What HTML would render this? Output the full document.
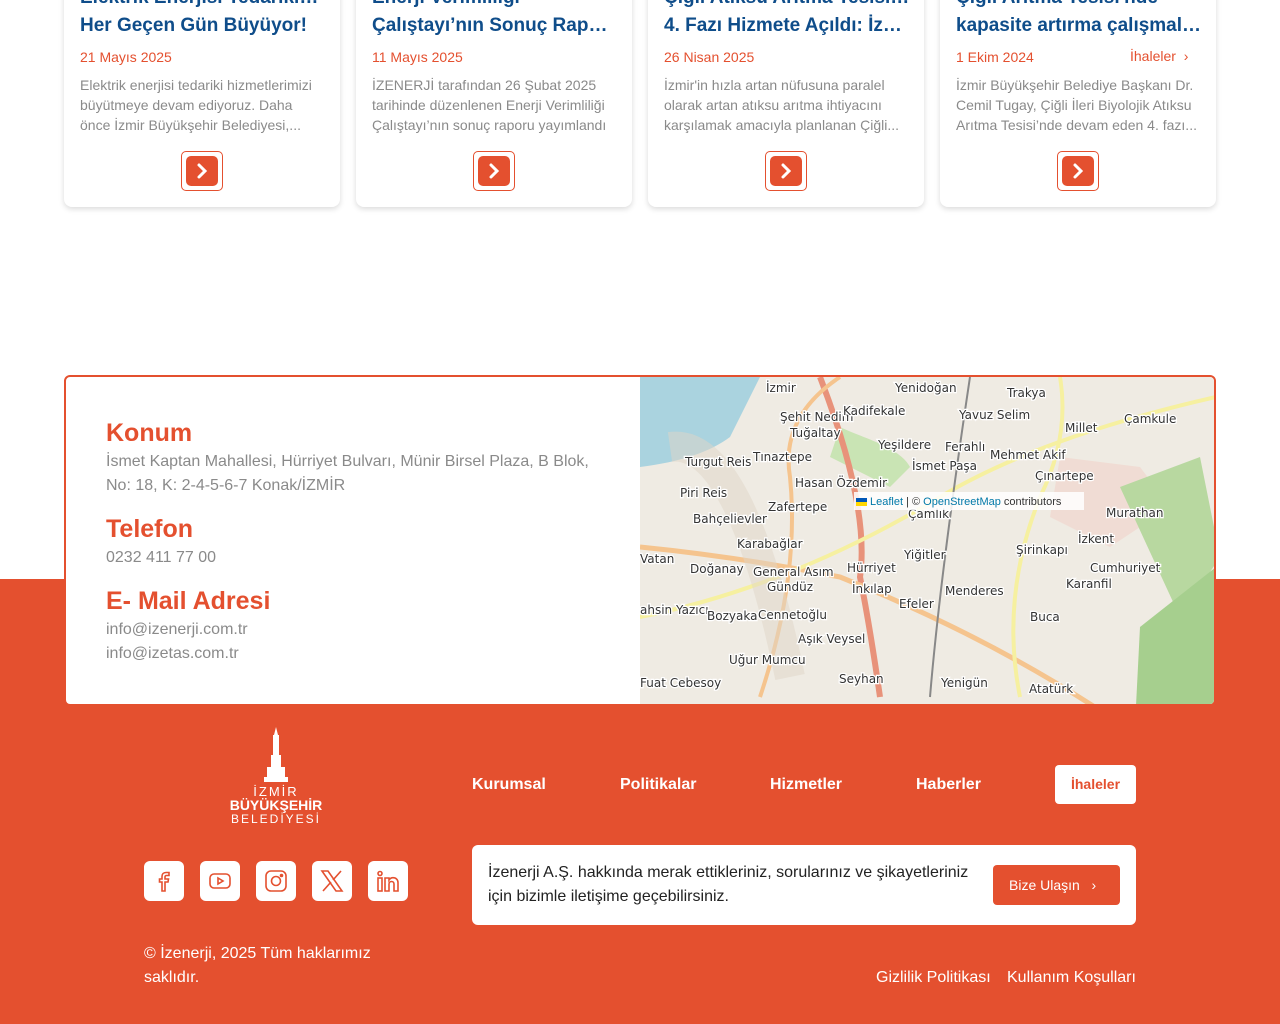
<!DOCTYPE html>
<html><head><meta charset="utf-8"><style>
*{box-sizing:border-box;margin:0;padding:0}
body{width:1280px;height:1024px;position:relative;overflow:hidden;background:#fff;font-family:"Liberation Sans",sans-serif}
.abs{position:absolute}
.card{position:absolute;top:-20px;width:276px;height:227px;background:#fff;border-radius:8px;box-shadow:0 2px 6px rgba(0,0,0,.15)}
.card .t{position:absolute;left:16px;top:4px;width:246px;color:#0f4d8a;font-weight:bold;font-size:19px;line-height:28px;white-space:nowrap;overflow:hidden;text-overflow:ellipsis}
.card .d{position:absolute;left:16px;top:69px;color:#e4502f;font-size:14px}
.card .p{position:absolute;left:16px;top:95px;width:246px;color:#8a8a8a;font-size:14px;line-height:20px}
.card .p div{white-space:nowrap;overflow:hidden;text-overflow:ellipsis}
.btn{position:absolute;left:117px;top:171px;width:42px;height:40px;border:1px solid #e4502f;border-radius:5px}
.btn div{position:absolute;left:4px;top:4px;width:32px;height:30px;background:#e4502f;border-radius:5px}
.orange{position:absolute;left:0;top:579px;width:1280px;height:445px;background:#e4502f}
.box{position:absolute;left:64px;top:375px;width:1152px;height:331px;border:2px solid #e4502f;border-radius:6px;background:#fff;overflow:hidden}
h3{position:absolute;left:40px;color:#e4502f;font-size:25px;font-weight:bold}
.ct{position:absolute;left:40px;color:#8a8a8a;font-size:16px;line-height:24px}
.nav{position:absolute;top:776px;color:#fff;font-weight:bold;font-size:16px}
.soc{position:absolute;top:861px;width:40px;height:40px;background:#fff;border-radius:6px}
.soc svg{position:absolute;left:8px;top:8px}
.map text{font-family:"DejaVu Sans",sans-serif;font-size:12px;fill:#333;stroke:#fff;stroke-width:2.5px;paint-order:stroke}
</style></head><body>

<div class="card" style="left:64px"><div class="t">Elektrik Enerjisi Tedarikimiz<br>Her Geçen Gün Büyüyor!</div><div class="d">21 Mayıs 2025</div><div class="p"><div>Elektrik enerjisi tedariki hizmetlerimizi</div><div>büyütmeye devam ediyoruz. Daha</div><div>önce İzmir Büyükşehir Belediyesi,...</div></div><div class="btn"><div><svg width="32" height="30"><path d="M13 9l6 6-6 6" stroke="#fff" stroke-width="3" fill="none" stroke-linecap="round"/></svg></div></div></div>
<div class="card" style="left:356px"><div class="t">Enerji Verimliliği<br>Çalıştayı’nın Sonuç Raporu</div><div class="d">11 Mayıs 2025</div><div class="p"><div>İZENERJİ tarafından 26 Şubat 2025</div><div>tarihinde düzenlenen Enerji Verimliliği</div><div>Çalıştayı’nın sonuç raporu yayımlandı</div></div><div class="btn"><div><svg width="32" height="30"><path d="M13 9l6 6-6 6" stroke="#fff" stroke-width="3" fill="none" stroke-linecap="round"/></svg></div></div></div>
<div class="card" style="left:648px"><div class="t">Çiğli Atıksu Arıtma Tesisinin<br>4. Fazı Hizmete Açıldı: İzmir</div><div class="d">26 Nisan 2025</div><div class="p"><div>İzmir'in hızla artan nüfusuna paralel</div><div>olarak artan atıksu arıtma ihtiyacını</div><div>karşılamak amacıyla planlanan Çiğli...</div></div><div class="btn"><div><svg width="32" height="30"><path d="M13 9l6 6-6 6" stroke="#fff" stroke-width="3" fill="none" stroke-linecap="round"/></svg></div></div></div>
<div class="card" style="left:940px"><div class="t">Çiğli Arıtma Tesisi'nde<br>kapasite artırma çalışmaları</div><div class="d">1 Ekim 2024</div><div class="p"><div>İzmir Büyükşehir Belediye Başkanı Dr.</div><div>Cemil Tugay, Çiğli İleri Biyolojik Atıksu</div><div>Arıtma Tesisi’nde devam eden 4. fazı...</div></div><div class="btn"><div><svg width="32" height="30"><path d="M13 9l6 6-6 6" stroke="#fff" stroke-width="3" fill="none" stroke-linecap="round"/></svg></div></div></div>
<div class="abs" style="left:1130px;top:48px;color:#e4502f;font-size:14px">İhaleler &nbsp;›</div>

<div class="orange"></div>
<div class="box">
<h3 style="top:42px">Konum</h3>
<div class="ct" style="top:73px">İsmet Kaptan Mahallesi, Hürriyet Bulvarı, Münir Birsel Plaza, B Blok,<br>No: 18, K: 2-4-5-6-7 Konak/İZMİR</div>
<h3 style="top:138px">Telefon</h3>
<div class="ct" style="top:169px">0232 411 77 00</div>
<h3 style="top:210px">E- Mail Adresi</h3>
<div class="ct" style="top:241px">info@izenerji.com.tr<br>info@izetas.com.tr</div>
<svg class="map" style="position:absolute;left:574px;top:0" width="576" height="329">
<rect width="576" height="329" fill="#efebe3"/>
<path d="M0 0H120C110 20 100 40 90 60C70 75 40 85 0 90Z" fill="#aad3df"/>
<path d="M200 50c20 10 60 20 70 40l-20 20-60-30z" fill="#c9e4b4"/>
<path d="M420 80l80 10 30 40-60 40-60-30z" fill="#f0d8d0" opacity=".8"/>
<path d="M480 110l80-30 20 100-40 60z" fill="#b8d8a0"/>
<path d="M500 250l76-60v139h-80z" fill="#a6cf8e"/>
<path d="M240 320 Q230 250 220 200 Q230 130 180 0" stroke="#e8927a" stroke-width="6" fill="none"/>
<path d="M0 170 Q100 180 200 200 Q350 260 470 340" stroke="#f5c48e" stroke-width="5" fill="none"/>
<path d="M0 240 Q150 210 300 120 Q400 60 576 20" stroke="#f6f0a0" stroke-width="4" fill="none"/>
<path d="M120 320 Q160 200 150 100 Q140 40 200 0" stroke="#f5c48e" stroke-width="4" fill="none"/>
<path d="M380 320 Q360 220 400 120 Q430 60 420 0" stroke="#f6f0a0" stroke-width="4" fill="none"/>
<path d="M30 70 Q100 60 150 300" stroke="#e0d6c8" stroke-width="30" fill="none" opacity=".5"/>
<path d="M290 320 Q300 200 330 0" stroke="#888" stroke-width="2" fill="none"/>
<text x="126" y="15">İzmir</text><text x="140" y="44">Şehit Nedim</text><text x="150" y="60">Tuğaltay</text>
<text x="203" y="38">Kadifekale</text><text x="255" y="15">Yenidoğan</text><text x="367" y="20">Trakya</text>
<text x="319" y="42">Yavuz Selim</text><text x="425" y="55">Millet</text><text x="484" y="46">Çamkule</text>
<text x="238" y="72">Yeşildere</text><text x="305" y="74">Ferahlı</text><text x="350" y="82">Mehmet Akif</text>
<text x="45" y="89">Turgut Reis</text><text x="113" y="84">Tınaztepe</text><text x="272" y="93">İsmet Paşa</text>
<text x="395" y="103">Çınartepe</text><text x="155" y="110">Hasan Özdemir</text><text x="40" y="120">Piri Reis</text>
<text x="128" y="134">Zafertepe</text><text x="53" y="146">Bahçelievler</text><text x="268" y="141">Çamlık</text>
<text x="466" y="140">Murathan</text><text x="97" y="171">Karabağlar</text><text x="264" y="182">Yiğitler</text>
<text x="376" y="177">Şirinkapı</text><text x="438" y="166">İzkent</text><text x="0" y="186">Vatan</text>
<text x="50" y="196">Doğanay</text><text x="113" y="199">General Asım</text><text x="207" y="195">Hürriyet</text>
<text x="450" y="195">Cumhuriyet</text><text x="127" y="214">Gündüz</text><text x="212" y="216">İnkılap</text>
<text x="305" y="218">Menderes</text><text x="426" y="211">Karanfil</text><text x="259" y="231">Efeler</text>
<text x="0" y="237">ahsin Yazıcı</text><text x="67" y="243">Bozyaka</text><text x="118" y="242">Cennetoğlu</text>
<text x="390" y="244">Buca</text><text x="158" y="266">Aşık Veysel</text><text x="89" y="287">Uğur Mumcu</text>
<text x="0" y="310">Fuat Cebesoy</text><text x="199" y="306">Seyhan</text><text x="301" y="310">Yenigün</text>
<text x="389" y="316">Atatürk</text>
<rect x="214" y="115" width="230" height="18" fill="#fff" opacity=".85"/>
<rect x="216" y="121" width="11" height="4" fill="#0057b7"/><rect x="216" y="125" width="11" height="4" fill="#ffd700"/>
<text x="230" y="128" style="font-family:'Liberation Sans';font-size:11px;stroke:none;fill:#0078a8">Leaflet <tspan fill="#333">| ©</tspan> OpenStreetMap <tspan fill="#333">contributors</tspan></text>
</svg>
</div>

<div class="abs" style="left:226px;top:727px;width:100px;text-align:center;color:#fff">
<svg width="30" height="55" viewBox="0 0 30 55"><path d="M15 0l2 8h1v20h2v12h4v10h3v5H3v-5h3V40h4V28h2V8h1z" fill="#fff"/></svg>
<div style="font-size:13px;letter-spacing:2px;line-height:13px;margin-top:-2px">İZMİR</div>
<div style="font-size:14px;font-weight:bold;line-height:15px">BÜYÜKŞEHİR</div>
<div style="font-size:12px;letter-spacing:2px;line-height:13px">BELEDİYESİ</div>
</div>

<div class="nav" style="left:472px">Kurumsal</div>
<div class="nav" style="left:620px">Politikalar</div>
<div class="nav" style="left:770px">Hizmetler</div>
<div class="nav" style="left:916px">Haberler</div>
<div class="abs" style="left:1055px;top:765px;width:81px;height:39px;background:#fff;border-radius:4px;color:#e4502f;font-weight:bold;font-size:14px;text-align:center;line-height:39px">İhaleler</div>

<div class="soc" style="left:144px"><svg width="24" height="24" fill="none" stroke="#e4502f" stroke-width="1.6"><path d="M13 22v-9h3l.5-3H13V8c0-1 .5-1.5 1.5-1.5H17V3.5h-3c-2.5 0-4 1.5-4 4V10H7.5v3H10v9z"/></svg></div>
<div class="soc" style="left:200px"><svg width="24" height="24" fill="none" stroke="#e4502f" stroke-width="1.6"><rect x="2" y="5" width="20" height="14" rx="4"/><path d="M10 9v6l5-3z"/></svg></div>
<div class="soc" style="left:256px"><svg width="24" height="24" fill="none" stroke="#e4502f" stroke-width="1.6"><rect x="2" y="2" width="20" height="20" rx="5"/><circle cx="12" cy="12" r="4.5"/><circle cx="17.5" cy="6.5" r="1" fill="#e4502f"/></svg></div>
<div class="soc" style="left:312px"><svg width="24" height="24" fill="none" stroke="#e4502f" stroke-width="1.6"><path d="M2 2h6l14 20h-6zM21 2l-8 9M3 22l8-9"/></svg></div>
<div class="soc" style="left:368px"><svg width="24" height="24" fill="none" stroke="#e4502f" stroke-width="1.6"><rect x="2" y="9" width="4" height="13"/><circle cx="4" cy="4.5" r="2"/><path d="M9 9h4v2c1-1.5 2.5-2.3 4-2.3 3 0 5 2 5 5V22h-4v-7c0-1.5-1-2.5-2.5-2.5S13 13.5 13 15v7H9z"/></svg></div>

<div class="abs" style="left:472px;top:845px;width:664px;height:80px;background:#fff;border-radius:6px">
<div class="abs" style="left:16px;top:16px;font-size:16px;line-height:24px;color:#222">İzenerji A.Ş. hakkında merak ettikleriniz, sorularınız ve şikayetleriniz<br>için bizimle iletişime geçebilirsiniz.</div>
<div class="abs" style="left:521px;top:20px;width:127px;height:40px;background:#e4502f;border-radius:4px;color:#fff;font-size:14px;line-height:40px;padding-left:16px">Bize Ulaşın &nbsp; ›</div>
</div>

<div class="abs" style="left:144px;top:942px;color:#fff;font-size:16px;line-height:24px">© İzenerji, 2025 Tüm haklarımız<br>saklıdır.</div>
<div class="abs" style="left:876px;top:966px;color:#fff;font-size:16px;line-height:24px">Gizlilik Politikası</div>
<div class="abs" style="left:1007px;top:966px;color:#fff;font-size:16px;line-height:24px">Kullanım Koşulları</div>
</body></html>
